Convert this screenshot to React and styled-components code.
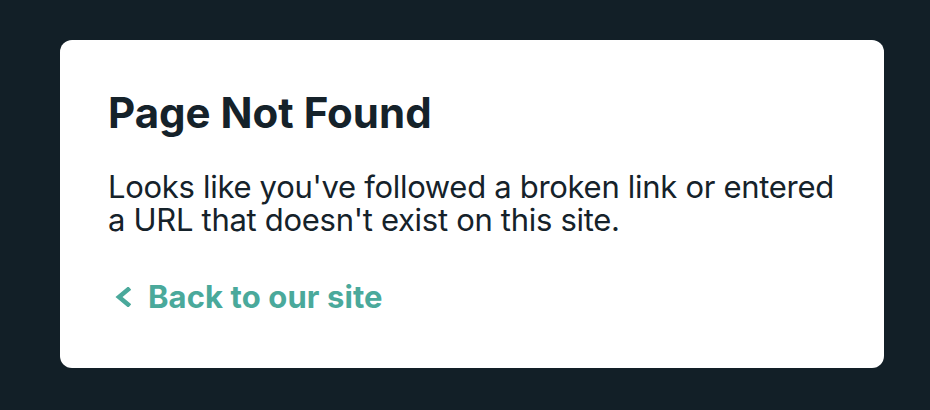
import React from 'react';
import styled, { createGlobalStyle } from 'styled-components';

const GlobalStyle = createGlobalStyle`
  html, body {
    margin: 0;
    padding: 0;
    background: #121f27;
    font-family: Inter, "Noto Sans", sans-serif;
  }
`;

const Chevron = () => (
  <ChevronSvg viewBox="0 0 16 20" aria-hidden="true">
    <polyline points="13,2.5 4,10 13,17.5" />
  </ChevronSvg>
);

const App = () => {
  return (
    <>
      <GlobalStyle />
      <Page>
        <Card>
          <Title>Page Not Found</Title>
          <Text>
            Looks like you've followed a broken link or entered a URL that doesn't exist on this site.
          </Text>
          <BackLink href="#">
            <Chevron />
            Back to our site
          </BackLink>
        </Card>
      </Page>
    </>
  );
};

export default App;

const Page = styled.div`
  min-height: 410px;
  box-sizing: border-box;
  padding: 40px 46px 43px 60px;
`;

const Card = styled.div`
  width: 824px;
  box-sizing: border-box;
  padding: 48px 48px 51px;
  background: #fff;
  border-radius: 12px;
`;

const Title = styled.h1`
  margin: 0 0 32px;
  font-size: 42px;
  line-height: 50px;
  font-weight: 700;
  color: #15222a;
`;

const Text = styled.p`
  margin: 0 0 41px;
  font-size: 31px;
  line-height: 33px;
  letter-spacing: -0.3px;
  font-weight: 400;
  color: #15222a;
`;

const BackLink = styled.a`
  display: inline-flex;
  align-items: center;
  gap: 17px;
  font-size: 31px;
  line-height: 40px;
  font-weight: 700;
  letter-spacing: 0.1px;
  color: #4aa99b;
  text-decoration: none;
  padding-left: 7px;
`;

const ChevronSvg = styled.svg`
  width: 16px;
  height: 20px;
  fill: none;
  stroke: currentColor;
  stroke-width: 4.5;
  stroke-linecap: square;
  stroke-linejoin: miter;
`;
